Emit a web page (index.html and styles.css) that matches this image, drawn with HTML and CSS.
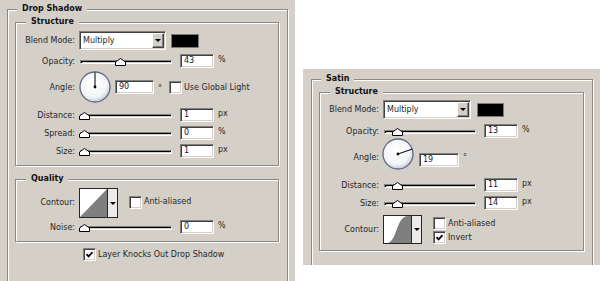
FILE: index.html
```html
<!DOCTYPE html>
<html lang="en">
<head>
    <meta charset="UTF-8">
    <meta name="viewport" content="width=device-width, initial-scale=1.0">
    <title>Layer Style</title>
    <link rel="stylesheet" href="styles.css">
</head>
<body>
<div class="page">

    <!-- Drop Shadow panel -->
    <div class="panel panel-drop">
        <div class="group outer">
            <span class="title">Drop Shadow</span>

            <div class="group inner structure">
                <span class="title">Structure</span>

                <div class="row row-blend">
                    <span class="label">Blend Mode:</span>
                    <div class="select"><span>Multiply</span><span class="drop-btn"><i class="arrow"></i></span></div>
                    <div class="swatch"></div>
                </div>

                <div class="row row-opacity">
                    <span class="label">Opacity:</span>
                    <div class="slider">
                        <div class="track"></div>
                        <svg class="thumb" style="left:35px" width="11" height="8" viewBox="0 0 11 8"><path d="M0.5 7.5V4L5.5 0.5L10.5 4V7.5Z" fill="#fff" stroke="#000"/></svg>
                    </div>
                    <div class="field">43</div>
                    <span class="unit">%</span>
                </div>

                <div class="row row-angle">
                    <span class="label">Angle:</span>
                    <svg class="dial" width="32" height="32" viewBox="0 0 32 32">
                        <defs>
                            <radialGradient id="dialA" cx="45%" cy="40%" r="60%">
                                <stop offset="0" stop-color="#fff"/>
                                <stop offset="0.75" stop-color="#f3f4f7"/>
                                <stop offset="1" stop-color="#c6cad6"/>
                            </radialGradient>
                        </defs>
                        <circle cx="16" cy="16" r="15" fill="url(#dialA)" stroke="#5f6986" stroke-width="1.3"/>
                        <line x1="16" y1="16" x2="16" y2="1.5" stroke="#000" stroke-width="1"/>
                        <circle cx="16" cy="16" r="1.4" fill="#000"/>
                    </svg>
                    <div class="field field-angle">90</div>
                    <span class="unit">&deg;</span>
                    <span class="check check-global"></span>
                    <span class="check-label">Use Global Light</span>
                </div>

                <div class="row row-distance">
                    <span class="label">Distance:</span>
                    <div class="slider">
                        <div class="track"></div>
                        <svg class="thumb" style="left:-1px" width="11" height="8" viewBox="0 0 11 8"><path d="M0.5 7.5V4L5.5 0.5L10.5 4V7.5Z" fill="#fff" stroke="#000"/></svg>
                    </div>
                    <div class="field">1</div>
                    <span class="unit">px</span>
                </div>

                <div class="row">
                    <span class="label">Spread:</span>
                    <div class="slider">
                        <div class="track"></div>
                        <svg class="thumb" style="left:-1px" width="11" height="8" viewBox="0 0 11 8"><path d="M0.5 7.5V4L5.5 0.5L10.5 4V7.5Z" fill="#fff" stroke="#000"/></svg>
                    </div>
                    <div class="field">0</div>
                    <span class="unit">%</span>
                </div>

                <div class="row">
                    <span class="label">Size:</span>
                    <div class="slider">
                        <div class="track"></div>
                        <svg class="thumb" style="left:-1px" width="11" height="8" viewBox="0 0 11 8"><path d="M0.5 7.5V4L5.5 0.5L10.5 4V7.5Z" fill="#fff" stroke="#000"/></svg>
                    </div>
                    <div class="field">1</div>
                    <span class="unit">px</span>
                </div>
            </div>

            <div class="group inner quality">
                <span class="title">Quality</span>

                <div class="row row-contour">
                    <span class="label">Contour:</span>
                    <div class="contour">
                        <svg width="27" height="28" viewBox="0 0 27 28">
                            <rect width="27" height="28" fill="#fff"/>
                            <polygon points="0,28 27,0 27,28" fill="#7f7f7f"/>
                        </svg>
                        <span class="contour-btn"><i class="arrow"></i></span>
                    </div>
                    <span class="check check-anti"></span>
                    <span class="check-label check-anti-label">Anti-aliased</span>
                </div>

                <div class="row row-noise">
                    <span class="label">Noise:</span>
                    <div class="slider">
                        <div class="track"></div>
                        <svg class="thumb" style="left:-1px" width="11" height="8" viewBox="0 0 11 8"><path d="M0.5 7.5V4L5.5 0.5L10.5 4V7.5Z" fill="#fff" stroke="#000"/></svg>
                    </div>
                    <div class="field">0</div>
                    <span class="unit">%</span>
                </div>
            </div>

            <div class="knock">
                <span class="check checked"><svg width="7" height="7" viewBox="0 0 7 7"><path d="M0.5 3.2L2.6 5.4L6.5 1.2" fill="none" stroke="#000" stroke-width="1.7"/></svg></span>
                <span class="check-label">Layer Knocks Out Drop Shadow</span>
            </div>
        </div>
    </div>

    <!-- Satin panel -->
    <div class="panel panel-satin">
        <div class="group outer">
            <span class="title">Satin</span>

            <div class="group inner structure">
                <span class="title">Structure</span>

                <div class="row row-blend">
                    <span class="label">Blend Mode:</span>
                    <div class="select"><span>Multiply</span><span class="drop-btn"><i class="arrow"></i></span></div>
                    <div class="swatch"></div>
                </div>

                <div class="row row-opacity">
                    <span class="label">Opacity:</span>
                    <div class="slider">
                        <div class="track"></div>
                        <svg class="thumb" style="left:8px" width="11" height="8" viewBox="0 0 11 8"><path d="M0.5 7.5V4L5.5 0.5L10.5 4V7.5Z" fill="#fff" stroke="#000"/></svg>
                    </div>
                    <div class="field">13</div>
                    <span class="unit">%</span>
                </div>

                <div class="row row-angle">
                    <span class="label">Angle:</span>
                    <svg class="dial" width="32" height="32" viewBox="0 0 32 32">
                        <defs>
                            <radialGradient id="dialB" cx="45%" cy="40%" r="60%">
                                <stop offset="0" stop-color="#fff"/>
                                <stop offset="0.75" stop-color="#f3f4f7"/>
                                <stop offset="1" stop-color="#c6cad6"/>
                            </radialGradient>
                        </defs>
                        <circle cx="16" cy="16" r="15" fill="url(#dialB)" stroke="#5f6986" stroke-width="1.3"/>
                        <line x1="16" y1="16" x2="30.2" y2="11.1" stroke="#000" stroke-width="1"/>
                        <circle cx="16" cy="16" r="1.4" fill="#000"/>
                    </svg>
                    <div class="field field-angle">19</div>
                    <span class="unit">&deg;</span>
                </div>

                <div class="row row-distance">
                    <span class="label">Distance:</span>
                    <div class="slider">
                        <div class="track"></div>
                        <svg class="thumb" style="left:8px" width="11" height="8" viewBox="0 0 11 8"><path d="M0.5 7.5V4L5.5 0.5L10.5 4V7.5Z" fill="#fff" stroke="#000"/></svg>
                    </div>
                    <div class="field">11</div>
                    <span class="unit">px</span>
                </div>

                <div class="row">
                    <span class="label">Size:</span>
                    <div class="slider">
                        <div class="track"></div>
                        <svg class="thumb" style="left:8px" width="11" height="8" viewBox="0 0 11 8"><path d="M0.5 7.5V4L5.5 0.5L10.5 4V7.5Z" fill="#fff" stroke="#000"/></svg>
                    </div>
                    <div class="field">14</div>
                    <span class="unit">px</span>
                </div>

                <div class="row row-contour">
                    <span class="label">Contour:</span>
                    <div class="contour">
                        <svg width="27" height="27" viewBox="0 0 27 27">
                            <rect width="27" height="27" fill="#fff"/>
                            <path d="M3 27C13 27 12 0 24 0H27V27Z" fill="#7f7f7f"/>
                        </svg>
                        <span class="contour-btn"><i class="arrow"></i></span>
                    </div>
                    <div class="check-list">
                        <div class="check-item">
                            <span class="check"></span>
                            <span class="check-label">Anti-aliased</span>
                        </div>
                        <div class="check-item">
                            <span class="check checked"><svg width="7" height="7" viewBox="0 0 7 7"><path d="M0.5 3.2L2.6 5.4L6.5 1.2" fill="none" stroke="#000" stroke-width="1.7"/></svg></span>
                            <span class="check-label">Invert</span>
                        </div>
                    </div>
                </div>
            </div>
        </div>
    </div>

</div>
</body>
</html>
```

FILE: styles.css
```css
body {
    margin: 0;
    background-color: #fff;
    font-family: "DejaVu Sans", Verdana, sans-serif;
    font-size: 8px;
    color: #262626;
}

.page {
    display: flex;
    align-items: flex-start;
    gap: 8px;
    width: 600px;
    height: 281px;
    overflow: hidden;
}

/* Dialog panels */
.panel {
    box-sizing: border-box;
    background-color: #d4d0c8;
    overflow: hidden;
    flex-shrink: 0;
}

.panel-drop {
    width: 295px;
    height: 281px;
    padding: 9px 0 0 7px;
}

.panel-satin {
    width: 297px;
    height: 196px;
    margin-top: 69px;
    padding: 10px 0 0 8px;
}

/* Etched group boxes */
.group {
    position: relative;
    box-sizing: border-box;
    border: 1px solid #8c8984;
    box-shadow: 1px 1px 0 #fff, inset 1px 1px 0 #fff;
}

.title {
    position: absolute;
    top: -7px;
    left: 10px;
    padding: 0 5px;
    line-height: 12px;
    font-weight: bold;
    color: #111;
    background-color: #d4d0c8;
}

.outer > .title {
    left: 9px;
}

.outer {
    width: 281px;
    height: 300px;
    padding-top: 12px;
}

.panel-satin .outer {
    width: 282px;
}

.inner {
    width: 264px;
    margin-left: 7px;
    padding-top: 8px;
}

.panel-drop .structure {
    height: 144px;
}

.panel-satin .structure {
    width: 265px;
    height: 159px;
    padding-top: 7px;
}

.quality {
    height: 63px;
    margin-top: 13px;
}

/* Rows */
.row {
    display: flex;
    align-items: center;
    height: 14px;
    margin-top: 4px;
}

.row-blend {
    height: 19px;
    margin-top: 0;
}

.row-angle {
    height: 32px;
    margin-top: 3px;
}

.panel-drop .row-angle .unit {
    margin-top: 12px;
}

.row-distance {
    margin-top: 5px;
}

.row-contour {
    height: 30px;
    margin-top: 0;
    align-items: flex-start;
}

.row-noise {
    margin-top: 2px;
}

.panel-satin .row-opacity {
    margin-top: 5px;
}

.panel-satin .row-angle {
    margin-top: 0;
    align-items: flex-start;
}

.panel-satin .row-angle .label {
    margin-top: 15px;
}

.panel-satin .row-angle .field {
    margin-top: 15px;
    margin-left: 5px;
    width: 40px;
}

.panel-satin .row-angle .unit {
    margin-top: 14px;
}

.panel-satin .row-distance {
    margin-top: 8px;
}

.panel-satin .row-contour {
    height: 29px;
    margin-top: 5px;
}

.label {
    flex-shrink: 0;
    width: 59px;
    margin-right: 5px;
    text-align: right;
    white-space: nowrap;
}

.row-contour .label {
    margin-top: 10px;
}

/* Select box */
.select {
    display: flex;
    align-items: center;
    justify-content: space-between;
    box-sizing: border-box;
    width: 87px;
    height: 19px;
    margin-left: -1px;
    padding: 0 1px 0 3px;
    background-color: #fff;
    border: 1px solid;
    border-color: #808080 #fff #fff #808080;
    box-shadow: inset 1px 1px 0 #404040, inset -1px -1px 0 #d4d0c8;
}

.panel-satin .select {
    width: 88px;
}

.drop-btn {
    display: flex;
    align-items: center;
    justify-content: center;
    box-sizing: border-box;
    width: 12px;
    height: 15px;
    background-color: #d4d0c8;
    border: 1px solid;
    border-color: #fff #404040 #404040 #fff;
    box-shadow: inset -1px -1px 0 #808080;
}

.arrow {
    width: 0;
    height: 0;
    border-left: 3px solid transparent;
    border-right: 3px solid transparent;
    border-top: 3px solid #000;
}

.swatch {
    box-sizing: border-box;
    width: 28px;
    height: 14px;
    margin-left: 5px;
    background-color: #000;
    border: 1px solid #7a7a7a;
}

.panel-satin .swatch {
    width: 27px;
    margin-left: 6px;
}

/* Sliders */
.slider {
    position: relative;
    flex-shrink: 0;
    width: 92px;
    height: 14px;
    margin-right: 8px;
}

.track {
    box-sizing: border-box;
    height: 4px;
    margin-top: 6px;
    border: 1px solid;
    border-color: #808080 #fff #fff #808080;
    box-shadow: inset 1px 1px 0 #000;
}

.thumb {
    position: absolute;
    top: 4px;
    display: block;
}

/* Number fields */
.field {
    box-sizing: border-box;
    width: 34px;
    height: 14px;
    padding-left: 3px;
    line-height: 12px;
    color: #101830;
    background-color: #fff;
    border: 1px solid;
    border-color: #808080 #fff #fff #808080;
    box-shadow: inset 1px 1px 0 #404040, inset -1px -1px 0 #d4d0c8;
}

.field-angle {
    width: 39px;
    margin-left: 4px;
}

.unit {
    align-self: flex-start;
    margin-left: 4px;
    line-height: 11px;
}

.dial {
    display: block;
    flex-shrink: 0;
    margin-left: -1px;
}

.panel-satin .dial {
    margin-left: -2px;
}

/* Checkboxes */
.check {
    display: flex;
    align-items: center;
    justify-content: center;
    flex-shrink: 0;
    box-sizing: border-box;
    width: 13px;
    height: 13px;
    background-color: #fff;
    border: 1px solid;
    border-color: #808080 #fff #fff #808080;
    box-shadow: inset 1px 1px 0 #404040, inset -1px -1px 0 #d4d0c8;
}

.check-label {
    margin-left: 2px;
    white-space: nowrap;
}

.check-global {
    margin-left: 7px;
}

.check-anti {
    margin-left: 11px;
    margin-top: 8px;
}

.check-anti-label {
    margin-top: 9px;
}

.check-list {
    display: flex;
    flex-direction: column;
    gap: 1px;
    margin-left: 11px;
    margin-top: 2px;
}

.check-item {
    display: flex;
    align-items: center;
}

.knock {
    display: flex;
    align-items: center;
    margin: 6px 0 0 75px;
}

/* Contour picker */
.contour {
    display: flex;
    flex-shrink: 0;
    box-sizing: border-box;
    width: 39px;
    height: 30px;
    margin-left: -1px;
    border: 1px solid #262626;
}

.panel-satin .contour {
    height: 29px;
}

.contour svg {
    display: block;
}

.contour-btn {
    display: flex;
    align-items: center;
    justify-content: center;
    flex: 1;
    border-left: 1px solid #262626;
    background-color: #ecebe8;
}
```
